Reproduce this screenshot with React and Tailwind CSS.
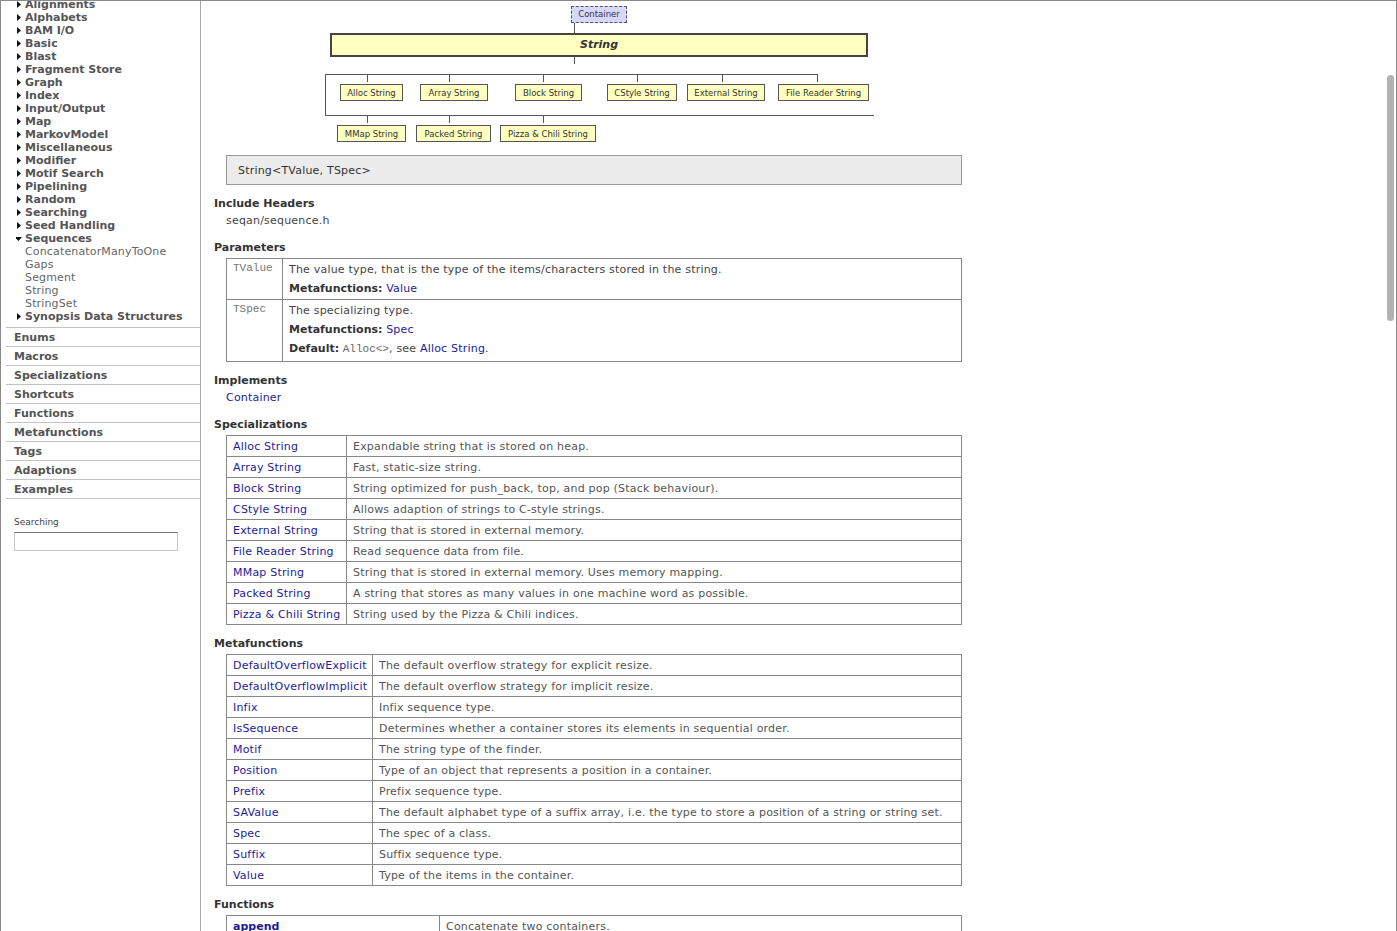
import React from 'react';

const categories = [
    'Alignments', 'Alphabets', 'BAM I/O', 'Basic', 'Blast', 'Fragment Store', 'Graph', 'Index',
    'Input/Output', 'Map', 'MarkovModel', 'Miscellaneous', 'Modifier', 'Motif Search', 'Pipelining',
    'Random', 'Searching', 'Seed Handling',
];
const sequenceItems = ['ConcatenatorManyToOne', 'Gaps', 'Segment', 'String', 'StringSet'];
const sections = ['Enums', 'Macros', 'Specializations', 'Shortcuts', 'Functions', 'Metafunctions', 'Tags', 'Adaptions', 'Examples'];

const specializations = [
    ['Alloc String', 'Expandable string that is stored on heap.'],
    ['Array String', 'Fast, static-size string.'],
    ['Block String', 'String optimized for push_back, top, and pop (Stack behaviour).'],
    ['CStyle String', 'Allows adaption of strings to C-style strings.'],
    ['External String', 'String that is stored in external memory.'],
    ['File Reader String', 'Read sequence data from file.'],
    ['MMap String', 'String that is stored in external memory. Uses memory mapping.'],
    ['Packed String', 'A string that stores as many values in one machine word as possible.'],
    ['Pizza & Chili String', 'String used by the Pizza & Chili indices.'],
];

const metafunctions = [
    ['DefaultOverflowExplicit', 'The default overflow strategy for explicit resize.'],
    ['DefaultOverflowImplicit', 'The default overflow strategy for implicit resize.'],
    ['Infix', 'Infix sequence type.'],
    ['IsSequence', 'Determines whether a container stores its elements in sequential order.'],
    ['Motif', 'The string type of the finder.'],
    ['Position', 'Type of an object that represents a position in a container.'],
    ['Prefix', 'Prefix sequence type.'],
    ['SAValue', 'The default alphabet type of a suffix array, i.e. the type to store a position of a string or string set.'],
    ['Spec', 'The spec of a class.'],
    ['Suffix', 'Suffix sequence type.'],
    ['Value', 'Type of the items in the container.'],
];

// diagram nodes, page coordinates
const children = [
    { label: 'Alloc String', x: 340, y: 84, w: 63 },
    { label: 'Array String', x: 420, y: 84, w: 68 },
    { label: 'Block String', x: 515, y: 84, w: 67 },
    { label: 'CStyle String', x: 607, y: 84, w: 70 },
    { label: 'External String', x: 687, y: 84, w: 78 },
    { label: 'File Reader String', x: 778, y: 84, w: 91 },
    { label: 'MMap String', x: 337, y: 125, w: 69 },
    { label: 'Packed String', x: 416, y: 125, w: 75 },
    { label: 'Pizza & Chili String', x: 500, y: 125, w: 96 },
];
const lines = [
    { x: 574, y: 23, w: 1, h: 10 },
    { x: 574, y: 57, w: 1, h: 7 },
    { x: 325, y: 74, w: 493, h: 1 },
    { x: 325, y: 74, w: 1, h: 42 },
    { x: 325, y: 115, w: 549, h: 1 },
    ...[367, 449, 543, 637, 722, 817].map(x => ({ x, y: 74, w: 1, h: 8 })),
    ...[367, 449, 543].map(x => ({ x, y: 115, w: 1, h: 8 })),
];

const OX = 201;
const OY = 1;

const RightTri = () => (
    <svg width="9" height="13" viewBox="0 0 9 13" className="shrink-0">
        <polygon points="1,3 5,6.5 1,10" fill="#111" />
    </svg>
);
const DownTri = () => (
    <svg width="9" height="13" viewBox="0 0 9 13" className="shrink-0">
        <polygon points="-1,5 6,5 2.5,9" fill="#111" />
    </svg>
);

const Link = ({ children, bold }) => (
    <span className={`text-[#1c1c96] ${bold ? 'font-bold tracking-normal' : ''}`}>{children}</span>
);

const Heading = ({ children }) => (
    <div className="mt-[10px] pl-[13px] text-[11px] leading-[17px] font-bold tracking-normal text-[#333]">{children}</div>
);

const Diagram = () => (
    <div className="relative h-[146px] tracking-normal">
        <div
            className="absolute flex items-center justify-center border border-dashed border-[#555] bg-[#d8d8ff] text-[8.5px] text-[#333]"
            style={{ left: 571 - OX, top: 6 - OY, width: 56, height: 17 }}
        >
            Container
        </div>
        <div
            className="absolute flex items-center justify-center border-2 border-[#444] bg-[#ffffc0] text-[11px] font-bold italic text-[#333]"
            style={{ left: 330 - OX, top: 33 - OY, width: 538, height: 24 }}
        >
            String
        </div>
        {lines.map((l, i) => (
            <div key={i} className="absolute bg-[#555]" style={{ left: l.x - OX, top: l.y - OY, width: l.w, height: l.h }} />
        ))}
        {children.map(c => (
            <div
                key={c.label}
                className="absolute flex items-center justify-center border border-[#555] bg-[#ffffc0] pt-px text-[8.5px] text-[#333] whitespace-nowrap"
                style={{ left: c.x - OX, top: c.y - OY, width: c.w, height: 17 }}
            >
                {c.label}
            </div>
        ))}
    </div>
);

const TwoColTable = ({ rows, firstWidth, boldLink }) => (
    <div className="mt-[2px] ml-[25px] w-[736px] border border-[#888] text-[11px]">
        {rows.map(([name, desc], i) => (
            <div key={name} className={`flex ${i > 0 ? 'h-[21px] border-t border-[#888]' : 'h-[20px]'}`}>
                <div className={`${firstWidth} shrink-0 px-[6px] pt-px leading-[19px] whitespace-nowrap`}>
                    <Link bold={boldLink}>{name}</Link>
                </div>
                <div className="flex-1 border-l border-[#888] px-[6px] pt-px leading-[19px] text-[#555] whitespace-nowrap overflow-hidden">{desc}</div>
            </div>
        ))}
    </div>
);

const Sidebar = () => (
    <div className="w-[200px] shrink-0 border-r border-[#a8a8a8] h-full overflow-hidden">
        <div className="-mt-[3px] pl-[15px] text-[11px] leading-[13px]">
            {categories.map(c => (
                <div key={c} className="flex items-center font-bold text-[#555]">
                    <RightTri />
                    <span>{c}</span>
                </div>
            ))}
            <div className="flex items-center font-bold text-[#555]">
                <DownTri />
                <span>Sequences</span>
            </div>
            {sequenceItems.map(s => (
                <div key={s} className="pl-[9px] text-[#666] tracking-[0.15px]">{s}</div>
            ))}
            <div className="flex items-center font-bold text-[#555]">
                <RightTri />
                <span>Synopsis Data Structures</span>
            </div>
        </div>
        <div className="mt-[4px] ml-[5px] border-t border-[#c4c4c4]">
            {sections.map(s => (
                <div key={s} className="h-[19px] pl-[8px] border-b border-[#c4c4c4] text-[11px] leading-[19px] font-bold text-[#555]">
                    {s}
                </div>
            ))}
        </div>
        <div className="mt-[17px] pl-[13px] text-[9px] leading-[12px] text-[#444]">Searching</div>
        <div className="mt-[4px] ml-[13px] h-[19px] w-[164px] border border-[#c8c8c8] border-t-[#777] bg-white" />
    </div>
);

const mono = "font-['Liberation_Mono',monospace] tracking-normal";

const Content = () => (
    <div className="relative flex-1 h-full overflow-hidden text-[11px] tracking-[0.2px] text-[#444]">
        <Diagram />
        <div className="mt-[8px] ml-[25px] flex h-[30px] w-[736px] items-center border border-[#999] bg-[#ececec] pl-[11px] pt-[2px] text-[#333]">
            String&lt;TValue, TSpec&gt;
        </div>

        <Heading>Include Headers</Heading>
        <div className="pl-[25px] leading-[17px] text-[#444]">seqan/sequence.h</div>

        <Heading>Parameters</Heading>
        <div className="mt-[2px] ml-[25px] w-[736px] border border-[#888]">
            <div className="flex">
                <div className={`w-[55px] shrink-0 px-[6px] pt-[1px] text-[11px] leading-[17px] text-[#777] ${mono}`}>TValue</div>
                <div className="flex-1 border-l border-[#888] px-[6px] py-px leading-[19px] text-[#444]">
                    <div>The value type, that is the type of the items/characters stored in the string.</div>
                    <div><span className="font-bold tracking-normal text-[#333]">Metafunctions:</span> <Link>Value</Link></div>
                </div>
            </div>
            <div className="flex border-t border-[#888]">
                <div className={`w-[55px] shrink-0 px-[6px] pt-[1px] text-[11px] leading-[17px] text-[#777] ${mono}`}>TSpec</div>
                <div className="flex-1 border-l border-[#888] px-[6px] pt-px pb-[2px] leading-[19px] text-[#444]">
                    <div>The specializing type.</div>
                    <div><span className="font-bold tracking-normal text-[#333]">Metafunctions:</span> <Link>Spec</Link></div>
                    <div>
                        <span className="font-bold tracking-normal text-[#333]">Default:</span>{' '}
                        <span className={`text-[11px] text-[#666] ${mono}`}>Alloc&lt;&gt;</span>, see <Link>Alloc String</Link>.
                    </div>
                </div>
            </div>
        </div>

        <Heading>Implements</Heading>
        <div className="pl-[25px] leading-[17px]"><Link>Container</Link></div>

        <Heading>Specializations</Heading>
        <TwoColTable rows={specializations} firstWidth="w-[119px]" />

        <Heading>Metafunctions</Heading>
        <TwoColTable rows={metafunctions} firstWidth="w-[145px]" />

        <Heading>Functions</Heading>
        <TwoColTable rows={[['append', 'Concatenate two containers.']]} firstWidth="w-[212px]" boldLink />

        {/* overlay scrollbar */}
        <div className="absolute right-[2px] top-[74px] h-[246px] w-[7px] rounded-full bg-[#b2b2b2]" />
    </div>
);

export default function App() {
    return (
        <div className="h-[931px] w-[1397px] overflow-hidden bg-white font-['DejaVu_Sans',Verdana,sans-serif]">
            <div className="flex h-full border-t border-x border-[#8a8a8a]">
                <Sidebar />
                <Content />
            </div>
        </div>
    );
}
